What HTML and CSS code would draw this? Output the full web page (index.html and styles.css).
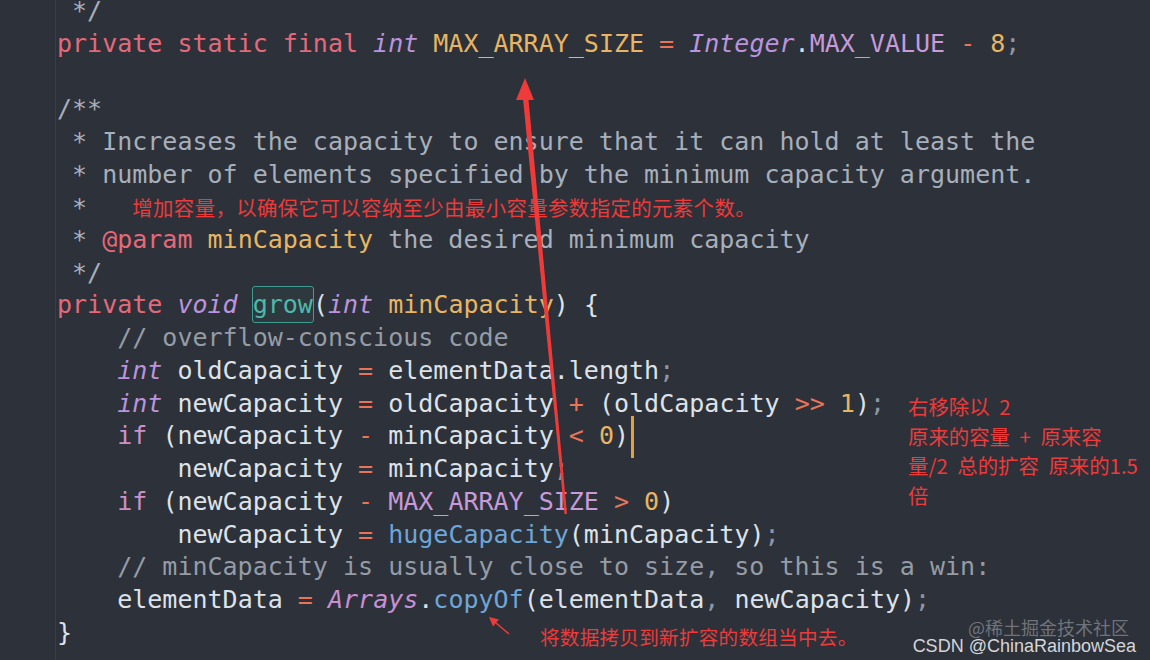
FILE: index.html
```html
<!DOCTYPE html>
<html>
<head>
<meta charset="utf-8">
<link rel="stylesheet" href="styles.css">
</head>
<body>
<div class="editor">
  <div class="guide guide-outer"></div>
  <div class="code">
<div class="ln"><span class="doc"> */</span></div>
<div class="ln"><span class="k">private static final</span> <span class="t">int</span> <span class="c">MAX_ARRAY_SIZE</span> <span class="o">=</span> <span class="t">Integer</span><span class="w">.</span><span class="p">MAX_VALUE</span> <span class="o">-</span> <span class="n">8</span><span class="pu">;</span></div>
<div class="ln"> </div>
<div class="ln"><span class="doc">/**</span></div>
<div class="ln"><span class="doc"> * Increases the capacity to ensure that it can hold at least the</span></div>
<div class="ln"><span class="doc"> * number of elements specified by the minimum capacity argument.</span></div>
<div class="ln"><span class="doc"> *   </span><span class="note-inline">增加容量，以确保它可以容纳至少由最小容量参数指定的元素个数。</span></div>
<div class="ln"><span class="doc"> * </span><span class="k">@param</span> <span class="c">minCapacity</span><span class="doc"> the desired minimum capacity</span></div>
<div class="ln"><span class="doc"> */</span></div>
<div class="ln"><span class="k">private</span> <span class="t">void</span> <span class="grow">grow</span><span class="w">(</span><span class="t">int</span> <span class="c">minCapacity</span><span class="w">) {</span></div>
<div class="ln"><span class="cm">    // overflow-conscious code</span></div>
<div class="ln">    <span class="t">int</span> <span class="w">oldCapacity</span> <span class="o">=</span> <span class="w">elementData.length</span><span class="pu">;</span></div>
<div class="ln">    <span class="t">int</span> <span class="w">newCapacity</span> <span class="o">=</span> <span class="w">oldCapacity</span> <span class="o">+</span> <span class="w">(oldCapacity</span> <span class="o">&gt;&gt;</span> <span class="n">1</span><span class="w">)</span><span class="pu">;</span></div>
<div class="ln">    <span class="kw">if</span> <span class="w">(newCapacity</span> <span class="o">-</span> <span class="w">minCapacity</span> <span class="o">&lt;</span> <span class="n">0</span><span class="w">)</span><span class="cursor"></span></div>
<div class="ln">        <span class="w">newCapacity</span> <span class="o">=</span> <span class="w">minCapacity</span><span class="pu">;</span></div>
<div class="ln">    <span class="kw">if</span> <span class="w">(newCapacity</span> <span class="o">-</span> <span class="p">MAX_ARRAY_SIZE</span> <span class="o">&gt;</span> <span class="n">0</span><span class="w">)</span></div>
<div class="ln">        <span class="w">newCapacity</span> <span class="o">=</span> <span class="fn">hugeCapacity</span><span class="w">(minCapacity)</span><span class="pu">;</span></div>
<div class="ln"><span class="cm">    // minCapacity is usually close to size, so this is a win:</span></div>
<div class="ln">    <span class="w">elementData</span> <span class="o">=</span> <span class="t ar">Arrays</span><span class="w">.</span><span class="fn">copyOf</span><span class="w">(elementData</span><span class="pu">,</span> <span class="w">newCapacity)</span><span class="pu">;</span></div>
<div class="ln"><span class="w">}</span></div>
  </div>

  <div class="note note-right">右移除以 2<br>原来的容量 + 原来容<br>量/2 总的扩容 原来的1.5<br>倍</div>
  <div class="note note-bottom">将数据拷贝到新扩容的数组当中去。</div>

  <div class="watermark">
    <div class="wm-juejin">@稀土掘金技术社区</div>
    <div class="wm-csdn">CSDN @ChinaRainbowSea</div>
  </div>

  <svg class="arrows" width="1150" height="660" viewBox="0 0 1150 660">
    <polygon points="522.5,94 528,94 567,514 564.5,514" fill="#ef3a3a"/>
    <polygon points="525,78 516,100 534,100" fill="#ef3a3a"/>
    <line x1="509" y1="634" x2="496" y2="623" stroke="#ef3a3a" stroke-width="1.6"/>
    <polygon points="489,617 499,619.5 493,626.5" fill="#ef3a3a"/>
  </svg>
</div>
</body>
</html>
```

FILE: styles.css
```css
html, body {
  margin: 0;
  padding: 0;
  background: #2d3139;
  overflow: hidden;
}

.editor {
  position: relative;
  width: 1150px;
  height: 660px;
  overflow: hidden;
  background: #2d3139;
}

.code {
  margin-top: -5px;
  padding-left: 57px;
  font-family: "DejaVu Sans Mono", monospace;
  font-size: 25px;
  line-height: 32.72px;
  color: #dde2e8;
}

.ln {
  white-space: pre;
  height: 32.72px;
}

.guide {
  position: absolute;
  top: 0;
  width: 1px;
  background: #383d46;
}
.guide-outer {
  left: 55px;
  height: 660px;
}

.doc { color: #a7afba; }
.cm { color: #959ca6; }
.k { color: #e5697a; }
.kw { color: #cc8fc8; }
.t { color: #bb94dd; font-style: italic; }
.ar { color: #c88fd3; }
.c { color: #e8b563; }
.p { color: #c79ad8; }
.o { color: #ea7358; }
.n { color: #e8b563; }
.w { color: #dde2e8; }
.pu { color: #8e97a4; }
.fn { color: #6ea6d8; }

.grow {
  color: #4dbaa9;
  outline: 1.5px solid #3f9d90;
  outline-offset: 0px;
  border-radius: 2px;
  padding: 3px 0;
  background: rgba(63, 157, 144, 0.08);
}

.cursor {
  display: inline-block;
  width: 3px;
  height: 42px;
  margin: -5px 0 -5px 2px;
  vertical-align: middle;
  background: #e5a23c;
}

.note-inline {
  font-family: "Noto Sans CJK SC", sans-serif;
  font-size: 20.4px;
  letter-spacing: 0.4px;
  color: #ec3b3b;
}

.note {
  position: absolute;
  font-family: "Noto Sans CJK SC", sans-serif;
  color: #ec3b3b;
  font-size: 20.4px;
  white-space: nowrap;
}

.note-right {
  left: 908px;
  top: 392px;
  line-height: 29.5px;
  word-spacing: 5px;
}

.note-bottom {
  left: 540px;
  top: 622px;
  line-height: 30px;
  font-size: 19.6px;
  letter-spacing: 0.25px;
}

.watermark {
  position: absolute;
  right: 14px;
  top: 616px;
  display: flex;
  flex-direction: column;
  align-items: flex-end;
}

.wm-juejin {
  font-family: "Noto Sans CJK SC", sans-serif;
  font-size: 18px;
  line-height: 22px;
  color: rgba(170, 174, 180, 0.55);
  margin-right: 7px;
}

.wm-csdn {
  font-family: "Liberation Sans", "Noto Sans CJK SC", sans-serif;
  font-size: 18px;
  line-height: 16px;
  color: #d4d6d9;
}

.arrows {
  position: absolute;
  left: 0;
  top: 0;
  pointer-events: none;
}
```
